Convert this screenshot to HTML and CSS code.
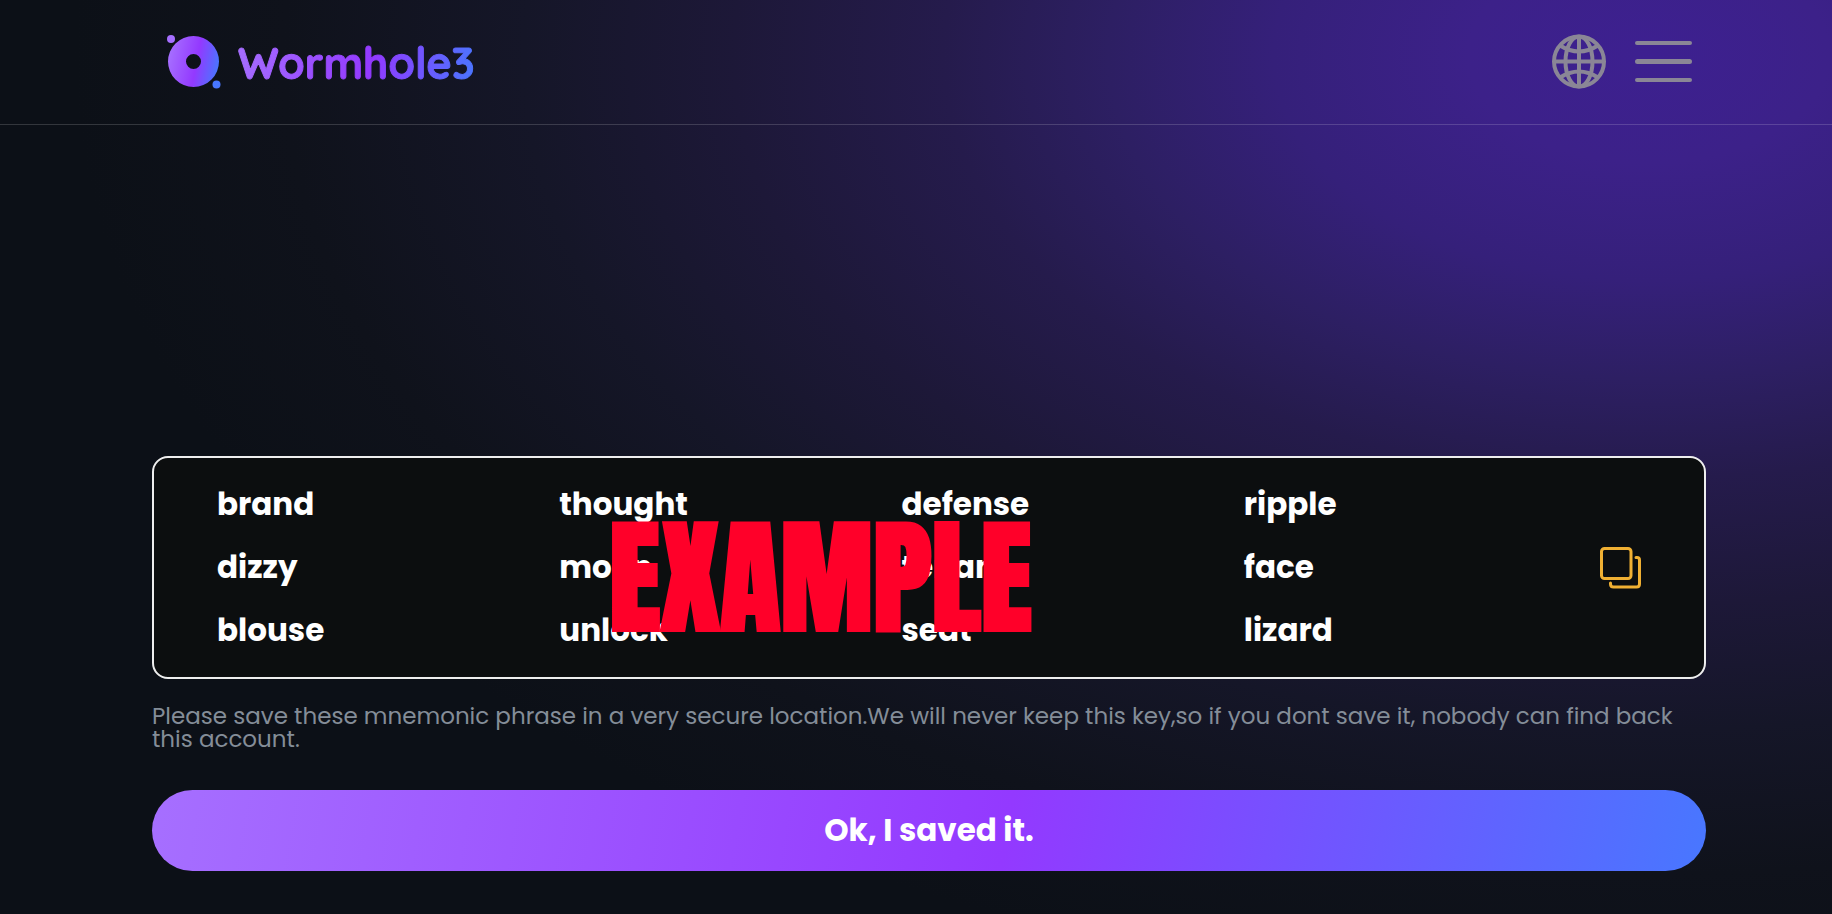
FILE: index.html
```html
<!DOCTYPE html>
<html lang="en">
  <head>
    <title>Wormhole3</title>
    <meta charset="utf-8" />
    <meta name="viewport" content="width=device-width, initial-scale=1" />
    <link rel="stylesheet" href="styles.css">
  </head>
  <body>
    <header class="header">
      <a class="logo" href="#">
        <svg class="logo-mark" viewBox="0 0 54 54" aria-hidden="true">
          <defs>
            <linearGradient id="brand" x1="0" y1="0.4" x2="1" y2="0.6">
              <stop offset="0" stop-color="#a66fff" />
              <stop offset="0.56" stop-color="#9339ff" />
              <stop offset="1" stop-color="#4877ff" />
            </linearGradient>
          </defs>
          <path fill="url(#brand)" fill-rule="evenodd" d="M26.500 1a25.500 25.500 0 1 0 0 51a25.500 25.500 0 1 0 0-51zM26.500 19a7.500 7.500 0 1 1 0 15a7.500 7.500 0 1 1 0-15z" />
          <circle cx="4" cy="4" r="4" fill="#a66fff" />
          <circle cx="49.500" cy="49.500" r="4" fill="#4877ff" />
        </svg>
        <span class="logo-text">Wormhole3</span>
      </a>
      <nav class="actions">
        <button class="icon-btn" type="button" aria-label="Language">
          <svg class="globe" viewBox="0 0 56 56" fill="none" stroke="#8a8696" stroke-width="4" aria-hidden="true">
            <circle cx="28" cy="27.500" r="25" />
            <path d="M28 2v51M3 27.500h50" />
            <ellipse cx="28" cy="27.500" rx="13.500" ry="25" />
            <path d="M9 11.500Q28 23.500 47 11.500M9 43.500Q28 31.500 47 43.500" />
          </svg>
        </button>
        <button class="icon-btn" type="button" aria-label="Menu">
          <svg class="menu" viewBox="0 0 57 42" fill="#8a8696" aria-hidden="true">
            <rect y="0" width="57" height="4" rx="2" />
            <rect y="18" width="57" height="5" rx="2.500" />
            <rect y="37" width="57" height="4" rx="2" />
          </svg>
        </button>
      </nav>
    </header>

    <main class="content">
      <section class="phrase">
        <ul class="words">
          <li>brand</li>
          <li>thought</li>
          <li>defense</li>
          <li>ripple</li>
          <li>dizzy</li>
          <li>moon</li>
          <li>tenant</li>
          <li>face</li>
          <li>blouse</li>
          <li>unlock</li>
          <li>seat</li>
          <li>lizard</li>
        </ul>
        <button class="icon-btn" type="button" aria-label="Copy">
          <svg class="copy" viewBox="0 0 42 42" fill="none" stroke="#f0b033" stroke-width="3" stroke-linecap="round" aria-hidden="true">
            <rect x="1.500" y="1.500" width="29.500" height="30" rx="3" />
            <path d="M36 10.500h1q2.500 0 2.500 2.500v24q0 3-3 3h-23q-3 0-3-3v-1" />
          </svg>
        </button>
        <span class="stamp">EXAMPLE</span>
      </section>
      <p class="note">
        Please save these mnemonic phrase in a very secure location.We will
        never keep this key,so if you dont save it, nobody can find back this
        account.
      </p>
      <button class="confirm" type="button">Ok, I saved it.</button>
    </main>
  </body>
</html>
```
FILE: styles.css
```css
* {
  box-sizing: border-box;
}
body {
  margin: 0;
  min-height: 100vh;
  display: flex;
  flex-direction: column;
  font-family: Poppins, Inter, sans-serif;
  color: #fff;
  background: radial-gradient(
      ellipse 1500px 900px at 90% 6%,
      #3d2090 0%,
      #3c2189 12%,
      #35207a 25%,
      #2d1f63 36%,
      #251b4c 47%,
      #1d1838 61%,
      #151628 75%,
      #0f121b 91%,
      #0c1017 105%
    )
    #0c1017;
}
.header {
  height: 125px;
  padding: 0 140px 0 167px;
  display: flex;
  align-items: center;
  justify-content: space-between;
  border-bottom: 1px solid rgba(255, 255, 255, 0.16);
}
.logo {
  display: flex;
  align-items: center;
  gap: 17px;
  text-decoration: none;
}
.logo-mark {
  width: 54px;
  height: 54px;
}
.logo-text {
  padding-top: 2px;
  font-family: Quicksand, Lato, sans-serif;
  font-size: 43px;
  font-weight: 700;
  line-height: 54px;
  color: transparent;
  -webkit-text-stroke: 1px transparent;
  background: linear-gradient(100deg, #a66fff, #9339ff 56%, #4877ff);
  -webkit-background-clip: text;
  background-clip: text;
}
.actions {
  display: flex;
  align-items: center;
  gap: 28px;
}
.icon-btn {
  display: flex;
  padding: 0;
  border: 0;
  background: none;
  cursor: pointer;
}
.globe {
  width: 56px;
  height: 56px;
}
.menu {
  width: 57px;
  height: 42px;
}

.content {
  flex: 1;
  display: flex;
  flex-direction: column;
  justify-content: flex-end;
  padding: 0 126px 43px 152px;
}
.phrase {
  position: relative;
  display: flex;
  align-items: center;
  gap: 14px;
  padding: 15px 62px 15px 63px;
  border: 2px solid #eee;
  border-radius: 16px;
  background: #0c0e0f;
}
.words {
  flex: 1;
  display: grid;
  grid-template-columns: repeat(4, 1fr);
  margin: 0;
  padding: 0;
  list-style: none;
  font-size: 31px;
  font-weight: 700;
  line-height: 63px;
}
.copy {
  width: 42px;
  height: 42px;
}
/* watermark printed over the words */
.stamp {
  position: absolute;
  top: 55%;
  left: 43%;
  transform: translate(-50%, -50%);
  font-family: Impact, Anton, "Liberation Sans Narrow", sans-serif;
  font-size: 124px;
  font-weight: 900;
  line-height: 1;
  color: #ff0029;
  pointer-events: none;
}
.note {
  margin: 26px 0 39px;
  font-size: 23px;
  line-height: 23px;
  color: #848d98;
}
.confirm {
  height: 81px;
  border: 0;
  border-radius: 41px;
  font: inherit;
  font-size: 31px;
  font-weight: 700;
  color: #fff;
  background: linear-gradient(100deg, #a66fff, #9339ff 55%, #4877ff);
  cursor: pointer;
}
```
